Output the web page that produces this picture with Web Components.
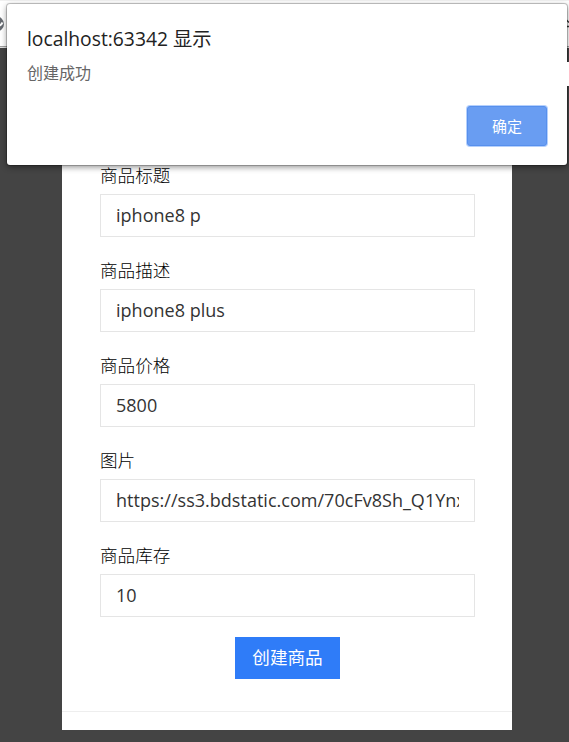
<!DOCTYPE html>
<html lang="zh-CN">
<head>
<meta charset="utf-8">
<title>创建商品</title>
<style>
html,body{margin:0;height:100%;overflow:hidden}
body{font-family:"Open Sans","Noto Sans CJK SC",sans-serif;background:#444}
</style>
</head>
<body>
<shop-app></shop-app>
<script>
const define = (name, html) => customElements.define(name, class extends HTMLElement {
  constructor() {
    super();
    this.attachShadow({ mode: 'open' }).innerHTML = html;
  }
});

define('browser-bar', `
<style>
:host{display:flex;justify-content:space-between;box-sizing:border-box;height:48px;padding-top:15px;background:#fff;border-top:1px solid #f0f0f0;border-bottom:1px solid #e0e0e0;box-shadow:inset 0 -1px #a0a0a0;overflow:hidden}
svg{display:block}
</style>
<svg width="5" height="17" viewBox="0 0 5 17"><circle cx="-3.5" cy="8" r="7.500" fill="#666a70"/><path d="M-2 9.500Q1 10 2.500 6.500" stroke="#fff" stroke-width="2" fill="none"/></svg>
<svg width="3" height="13" viewBox="0 0 3 13"><path d="M0 3.500l3 3M0 10.500h3" stroke="#333" stroke-width="1.300" fill="none"/></svg>`);

define('form-field', `
<style>
:host{display:block;height:95px}
.label{height:27px;line-height:16px;font-size:17.6px;font-weight:300;color:#000;white-space:nowrap}
.box{box-sizing:border-box;height:43px;padding:0 15px;border:1px solid #e5e5e5;background:#fff}
.value{height:41px;line-height:41px;font-size:18px;color:#333;white-space:nowrap;overflow:hidden;letter-spacing:.02px}
</style>
<div class="label"><slot name="label"></slot></div>
<div class="box"><div class="value"><slot></slot></div></div>`);

define('submit-button', `
<style>
:host{display:block;width:105px;height:42px;line-height:41px;background:#2f7cf8;color:#fff;font-size:17.6px;text-align:center;white-space:nowrap}
</style><slot></slot>`);

define('product-form', `
<style>
:host{display:flex;flex-direction:column;box-sizing:border-box;width:450px;height:682px;margin-left:62px;padding:119px 37px 0 38px;background:#fff}
submit-button{align-self:center;margin-top:-5px}
.rule{height:1px;background:#eee;margin:32px -37px 0 -38px}
</style>
<form-field><span slot="label">商品标题</span>iphone8 p</form-field>
<form-field><span slot="label">商品描述</span>iphone8 plus</form-field>
<form-field><span slot="label">商品价格</span>5800</form-field>
<form-field><span slot="label">图片</span>https://ss3.bdstatic.com/70cFv8Sh_Q1Ynx</form-field>
<form-field><span slot="label">商品库存</span>10</form-field>
<submit-button>创建商品</submit-button>
<div class="rule"></div>`);

define('alert-dialog', `
<style>
:host{display:flex;flex-direction:column;box-sizing:border-box;width:560px;height:161px;padding:20px 20px 0;background:#fff;border-radius:3px;box-shadow:0 0 0 1px rgba(0,0,0,.2),0 2px 6px rgba(0,0,0,.45)}
.title{height:29px;line-height:30px;font-size:19.3px;color:#222;white-space:nowrap}
.message{height:24px;line-height:24px;margin-top:8px;font-size:16px;color:#666}
.ok{box-sizing:border-box;align-self:flex-end;width:80px;height:40px;margin-top:21px;line-height:38px;border:1px solid #5790ed;border-radius:3px;background:#699df2;box-shadow:0 0 0 1px #b5d0fc;color:#fff;font-size:15px;text-align:center}
</style>
<div class="title"><slot name="title"></slot></div>
<div class="message"><slot></slot></div>
<div class="ok"><slot name="action"></slot></div>`);

define('shop-app', `
<style>
:host{display:block;position:relative;height:742px;background:#444;overflow:hidden}
alert-dialog{position:absolute;left:7px;top:4px}
.edge{position:absolute;right:0;top:62px;width:2px;height:24px;background:#fff}
</style>
<browser-bar></browser-bar>
<product-form></product-form>
<alert-dialog><span slot="title">localhost:63342 显示</span>创建成功<span slot="action">确定</span></alert-dialog>
<div class="edge"></div>`);
</script>
</body>
</html>
